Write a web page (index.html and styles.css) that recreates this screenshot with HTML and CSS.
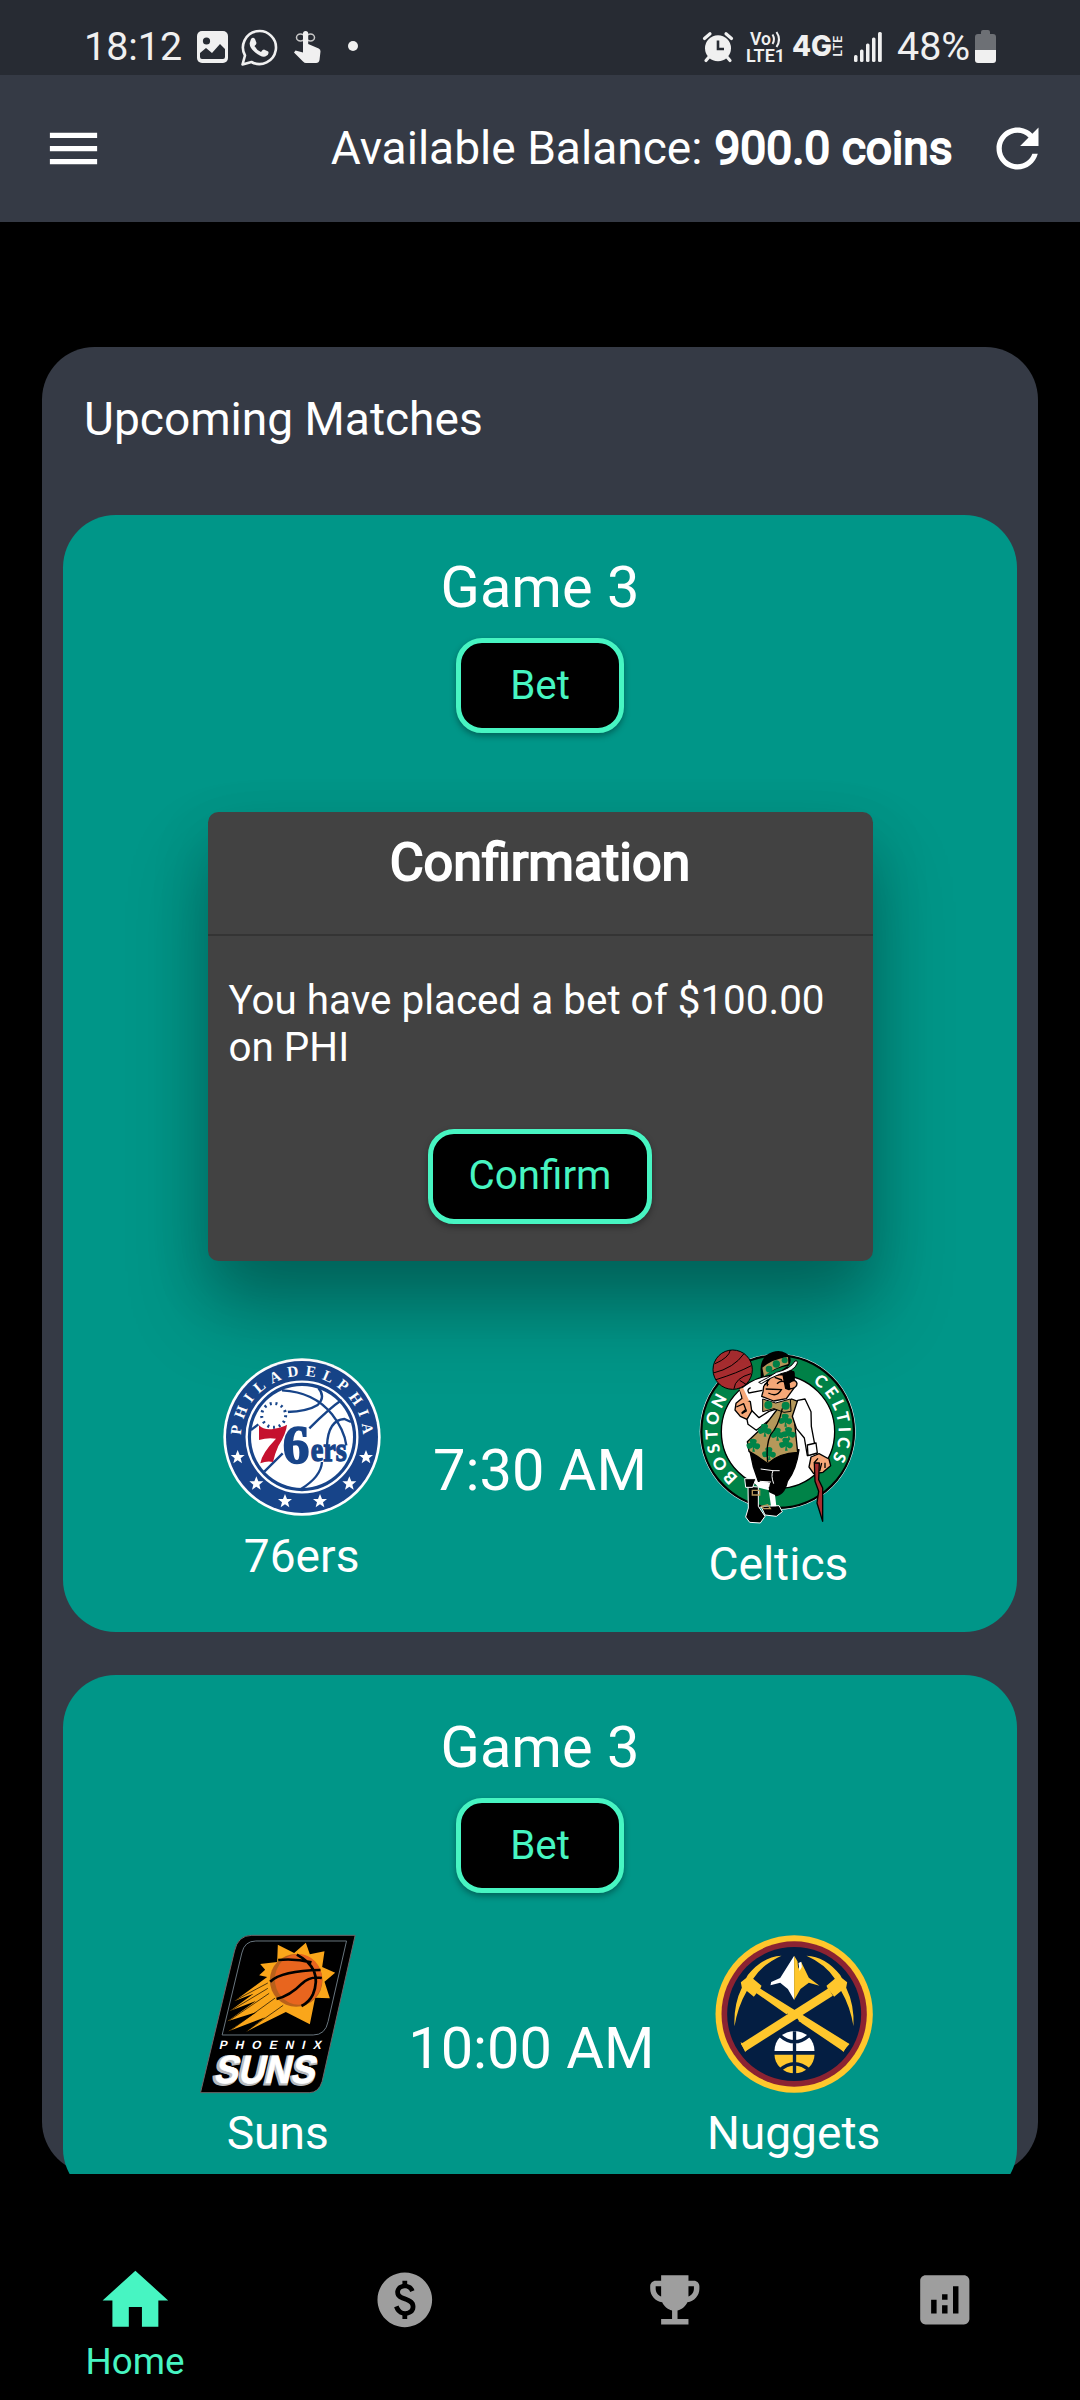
FILE: index.html
```html
<!DOCTYPE html>
<html lang="en">
<head>
<meta charset="utf-8">
<title>Upcoming Matches</title>
<link rel="stylesheet" href="styles.css">
</head>
<body>
<div class="screen">
  <header class="status">
    <span class="clock">18:12</span>
    <svg class="s-gallery" width="31" height="32" viewBox="0 0 31 32"><rect width="31" height="32" rx="5" fill="#f0f0f0"/><circle cx="9.5" cy="10" r="3.6" fill="#272b33"/><path d="M3 22L9 17l6 5 8-9 5 5v8q0 2-2 2H5q-2 0-2-2z" fill="#272b33"/></svg>
    <svg class="s-whatsapp" width="37" height="38" viewBox="0 0 37 38" fill="none"><path d="M1.500 36.500L4 27.500A16.500 16.500 0 1 1 10.500 34Z" stroke="#f0f0f0" stroke-width="2.600" stroke-linejoin="round"/><path d="M10 11q2-2.500 4 0l1.500 4q0 1.500-2 3 2 4 6.500 6 2-2.800 3.500-2.300l3.700 1.800q1.500 3-3 5-4 1-10-4-6-5-5.500-9.500Z" fill="#f0f0f0"/></svg>
    <svg class="s-touch" width="27" height="34" viewBox="0 0 27 34"><g fill="none" stroke="#c8c8c8" stroke-width="1.500"><ellipse cx="6.500" cy="7.500" rx="4" ry="3.500"/><ellipse cx="16.500" cy="7.500" rx="4" ry="3.500"/></g><path d="M9 3.500a2.600 2.600 0 0 1 5.200 0V14l10.500 4.500q2 1 1.800 3L25.500 30q-.5 3-3.500 3H12q-1.500 0-3-1.500L0 22.500l1.500-2L9 22.500Z" fill="#f0f0f0"/></svg>
    <span class="s-dot"></span>
    <svg class="s-right" width="30" height="30" viewBox="0 0 30 30"><path d="M1.500 6.500L7 1.800M28.500 6.500L23 1.800M6 25l-3 3.500M24 25l3 3.500" stroke="#f0f0f0" stroke-width="3.200" stroke-linecap="round"/><circle cx="15" cy="16.300" r="13" fill="#f0f0f0"/><path d="M15 8.500v8.500h6" stroke="#272b33" stroke-width="2.600" fill="none"/></svg>
    <svg class="s-volte" width="40" height="33" viewBox="0 0 40 33" fill="#f0f0f0" font-family="Roboto, sans-serif" font-weight="600"><text x="4" y="14" font-size="18" textLength="21" lengthAdjust="spacingAndGlyphs">Vo</text><path d="M26.500 3.500q3 5 0 9.500M30.500 1q5 7.500 0 15" fill="none" stroke="#f0f0f0" stroke-width="2"/><text x="0" y="31" font-size="19" textLength="39" lengthAdjust="spacingAndGlyphs">LTE1</text></svg>
    <svg class="s-4g" width="51" height="22" viewBox="0 0 51 22" fill="#f0f0f0" font-family="Inter, sans-serif"><text x="0" y="20.500" font-size="28" font-weight="800" textLength="40" lengthAdjust="spacingAndGlyphs">4G</text><text transform="translate(50 21.500) rotate(-90)" font-size="11.500" font-weight="600" textLength="21" lengthAdjust="spacingAndGlyphs">LTE</text></svg>
    <svg class="s-signal" width="28" height="30" viewBox="0 0 28 30" fill="#f0f0f0"><rect x="0" y="23" width="3.500" height="7" rx="1.500"/><rect x="6" y="17.500" width="3.500" height="12.500" rx="1.500"/><rect x="12" y="11.500" width="3.500" height="18.500" rx="1.500"/><rect x="18" y="5.500" width="3.500" height="24.500" rx="1.500"/><rect x="24" y="0" width="3.800" height="30" rx="1.500"/></svg>
    <span class="percent">48%</span>
    <svg class="s-battery" width="21" height="33" viewBox="0 0 21 33"><path d="M6 2q0-2 2-2h5q2 0 2 2v2h3q3 0 3 3v13H0V7q0-3 3-3h3z" fill="#6d7075"/><path d="M0 20h21v10q0 3-3 3H3q-3 0-3-3z" fill="#f0f0f0"/></svg>
  </header>

  <div class="appbar">
    <svg class="menu" viewBox="0 0 24 24" fill="#fff"><path d="M3 18h18v-2H3v2zm0-5h18v-2H3v2zm0-7v2h18V6H3z"/></svg>
    <p class="balance"><span class="balance-label">Available Balance:</span><b class="balance-value">900.0 coins</b></p>
    <svg class="refresh" viewBox="0 0 24 24" fill="#fff"><path d="M17.650 6.350C16.200 4.900 14.210 4 12 4c-4.420 0-7.990 3.580-7.990 8s3.570 8 7.990 8c3.730 0 6.840-2.550 7.730-6h-2.080c-.82 2.330-3.040 4-5.650 4-3.310 0-6-2.690-6-6s2.690-6 6-6c1.660 0 3.140.69 4.220 1.780L13 11h7V4l-2.350 2.350z"/></svg>
  </div>

  <main class="panel">
    <h1 class="panel-title">Upcoming Matches</h1>
    <div class="list">
      <section class="card card-tall">
        <h2 class="game">Game 3</h2>
        <button class="btn bet">Bet</button>
        <div class="teams">
          <div class="team">
            <svg width="158" height="158" viewBox="66 54 474 474">
              <defs><path id="arc76" d="M120 291A183 183 0 0 1 486 291"/></defs>
              <circle cx="303" cy="291" r="236" fill="#fff"/>
              <circle cx="303" cy="291" r="228" fill="#174489"/>
              <circle cx="303" cy="291" r="166" fill="none" stroke="#fff" stroke-width="7"/>
              <circle cx="303" cy="291" r="153" fill="#fff"/>
              <g fill="none" stroke="#174489" stroke-width="7"><path d="M243 151Q340 156 393 223Q430 270 436 316M352 144Q375 170 350 195Q320 214 258 216M422 180Q385 205 325 265M378 316Q382 240 430 237L450 246M363 366Q360 410 300 447M190 395L245 340M150 270L172 253"/></g>
              <circle cx="218" cy="226" r="44" fill="#fff"/>
              <circle cx="218" cy="226" r="36" fill="none" stroke="#174489" stroke-width="9" stroke-dasharray="6 11.400"/>
              <path d="M174 256Q190 272 220 266Q245 262 258 254Q256 280 232 318Q222 340 216 366Q198 362 178 370Q182 340 225 296Q200 292 174 300Z" fill="#c5112e"/>
              <g font-family="Liberation Serif, serif" font-weight="bold" fill="#174489" stroke="#174489"><text x="245" y="369" font-size="166" stroke-width="5" textLength="80" lengthAdjust="spacingAndGlyphs">6</text><text x="329" y="364" font-size="100" stroke-width="4" textLength="108" lengthAdjust="spacingAndGlyphs">ers</text></g>
              <text font-family="Liberation Serif, serif" font-weight="bold" font-size="46" fill="#fff"><textPath href="#arc76" startOffset="1%" textLength="562">PHILADELPHIA</textPath></text>
              <g fill="#fff"><path id="st" d="M110 330l6 15 15 0-12 10 4 15-13-9-13 9 4-15-12-10 15 0z"/><use href="#st" x="56" y="79"/><use href="#st" x="142" y="132"/><use href="#st" x="247" y="132"/><use href="#st" x="335" y="79"/><use href="#st" x="385"/></g>
            </svg>
            <span class="name">76ers</span>
          </div>
          <span class="time">7:30 AM</span>
          <div class="team">
            <svg width="158" height="175" viewBox="60 58 474 525">
              <defs><path id="bos" d="M178 443A181 181 0 0 1 151 198"/><path id="cel" d="M401 158A181 181 0 0 1 456 395"/></defs>
              <circle cx="296" cy="306" r="234" fill="#fff"/>
              <circle cx="296" cy="306" r="229" fill="#008348" stroke="#000" stroke-width="7"/>
              <circle cx="297" cy="306" r="170" fill="#fff" stroke="#000" stroke-width="4"/>
              <g font-family="Lato, sans-serif" font-weight="900" fill="#fff" font-size="50"><text><textPath href="#bos" textLength="262">BOSTON</textPath></text><text><textPath href="#cel" textLength="260">CELTICS</textPath></text></g>
              <g stroke="#000" stroke-width="4" stroke-linejoin="round">
                <path d="M181 172L196 208 214 216 219 249 204 269 184 260 168 241 171 221 189 206Z" fill="#f6a878"/>
                <path d="M172 232l22-10 8 22-14 8M188 250l14-12" fill="none"/>
                <path d="M204 269L219 243 240 264 270 245 300 235 275 268 232 302 207 284Z" fill="#fff"/>
                <path d="M213 365L360 360Q352 420 325 455Q316 498 285 498L270 484 276 457 238 455Q220 410 213 365Z"/>
                <path d="M205 336L262 282 300 232 338 208 356 215 346 270 356 368Q300 370 266 402L235 380 210 365Z" fill="#b5985a"/>
                <path d="M356 212L378 208 396 246 397 290 412 370 385 378 376 325 352 296 340 260Z" fill="#fff"/>
                <path d="M385 346l26-6 4 30-28 8z" fill="#fff"/>
                <path d="M396 382L420 372 450 388 455 408 432 428 404 432 390 412Z" fill="#f6a878"/>
                <path d="M405 400l12-14M422 424l6-24M438 415v-16" fill="none"/>
                <path d="M406 400L421 400 419 450 431 475 431 575 414 520 419 485 408 455Z" fill="#a92d30"/>
                <path d="M254 170L280 138 344 126 346 174 322 207 284 214 248 200 252 186Z" fill="#f6a878"/>
                <path d="M325 112L345 130 345 155 330 180 320 176 312 135 290 136Z"/>
                <path d="M330 160Q350 145 354 162Q354 174 332 178Z" fill="#f6a878"/>
              </g>
              <path d="M245 128Q242 96 262 76Q295 56 320 70Q344 84 330 108Q290 112 245 145Z"/>
              <path d="M250 114Q280 88 327 82L328 103Q285 114 255 140Z" fill="#b5985a"/>
              <path d="M239 158Q265 146 292 128Q335 118 348 94Q358 92 354 103Q345 124 306 132Q270 146 247 162Z" fill="#fff" stroke="#000" stroke-width="3"/>
              <path d="M268 190Q294 204 307 180L260 178M287 143l22 8M294 162q12-12 26-4M265 150v20M250 182l-40 8q-8-10 5-16M256 166q6-8 12 0" fill="none" stroke="#000" stroke-width="4"/>
              <path d="M251 208L290 220 334 208 336 245 315 248 285 237 251 246Z" fill="#b5985a" stroke="#000" stroke-width="3"/>
              <g fill="#008348"><path id="clover" d="M-3 18L-1 5Q-18 16-20 2-24-8-9-8-16-21 0-21 15-20 8-7 23-8 20 5 14 17 2 6L5 18Z" transform="translate(295 315)"/><use href="#clover" x="-72" y="33"/><use href="#clover" x="-25" y="58"/><use href="#clover" x="26" y="30"/><use href="#clover" x="24" y="-42"/><use href="#clover" x="34" y="-2"/><use href="#clover" x="-38" y="-12"/><circle cx="268" cy="226" r="12"/><circle cx="320" cy="228" r="12"/><circle cx="270" cy="118" r="10"/><circle cx="292" cy="103" r="11"/><circle cx="317" cy="92" r="9"/></g>
              <path d="M310 236Q298 290 275 315Q260 345 266 398" fill="none" stroke="#000" stroke-width="4"/>
              <path d="M245 418L282 423H302M282 423Q275 438 284 462M276 457l-34-2" fill="none" stroke="#fff" stroke-width="3"/>
              <g stroke="#fff" stroke-width="3"><path d="M207 470L238 472 238 530 258 560 244 580 212 578 200 562 208 535Z"/><path d="M246 530L300 528 310 546 292 560 258 556Z"/></g>
              <path d="M222 456L268 458 270 482 240 474ZM270 488L288 496 292 530 276 530Z" fill="#fff"/>
              <path d="M197 447h34l-10 26h-21z" stroke="#fff" stroke-width="3"/>
              <path d="M220 482h22v14h-22zM248 530l18-5 8 12h-20z" fill="none" stroke="#b5985a" stroke-width="4"/>
              <circle cx="161" cy="120" r="59" fill="#a92d30" stroke="#000" stroke-width="3"/>
              <path d="M154 61Q150 84 108 102M103 130Q165 115 195 72M111 150Q175 130 217 108M165 177Q168 145 216 132M182 152L201 164" fill="none" stroke="#000" stroke-width="3"/>
              <path d="M181 178L192 174 211 214 196 216Z" fill="#f6a878"/>
            </svg>
            <span class="name">Celtics</span>
          </div>
        </div>
      </section>

      <section class="card card-short">
        <h2 class="game">Game 3</h2>
        <button class="btn bet">Bet</button>
        <div class="teams">
          <div class="team">
            <svg width="156" height="158" viewBox="55 76 467 474">
              <path d="M210 77H520L421 515Q411 549 382 549H56L158 124Q168 77 210 77Z" stroke="#6d6668" stroke-width="3"/>
              <path d="M222 94H494L439 335Q431 376 394 376H121L180 130Q188 94 222 94Z" fill="none" stroke="#68757e" stroke-width="3"/>
              <path d="M288 105L337 130 372 99 384 134 428 125 421 172 460 189 428 216 444 266 400 264 384 344 312 307 193 366 250 323 140 365 225 307 137 335 222 274 144 304 215 252 158 274 256 202 232 197 250 180 235 163 286 157Z" fill="#faa61a"/>
              <path d="M160 272L258 220M147 303L258 236M140 334L262 251M145 363L280 265M195 364L304 287" stroke="#000" stroke-width="2"/>
              <circle cx="343" cy="212" r="79" fill="#b9601a"/>
              <ellipse cx="350" cy="209" rx="71" ry="76" fill="#e8651e"/>
              <path d="M289 151Q340 146 389 158M265 216Q300 183 416 181M284 268Q325 258 360 222Q385 198 420 205M345 135Q425 177 393 255Q382 278 359 289" fill="none" stroke="#000" stroke-width="8"/>
              <g font-family="Liberation Sans, sans-serif" font-weight="bold" transform="skewX(-13)"><text x="207" y="418" font-size="36" fill="#fff" textLength="306">PHOENIX</text><g font-size="118"><text x="209" y="523" fill="#b9babc" stroke="#b9babc" stroke-width="9" textLength="306" lengthAdjust="spacingAndGlyphs">SUNS</text><text x="214" y="519" fill="#fff" stroke="#fff" stroke-width="2" textLength="302" lengthAdjust="spacingAndGlyphs" aria-hidden="true">SUNS</text></g></g>
            </svg>
            <span class="name">Suns</span>
          </div>
          <span class="time">10:00 AM</span>
          <div class="team">
            <svg width="158" height="158" viewBox="77 76 473 474">
              <circle cx="314" cy="313" r="236" fill="#ffc72c"/><circle cx="314" cy="313" r="218" fill="#8b2332"/><circle cx="314" cy="313" r="201" fill="#041e42"/>
              <path d="M211 236L480 403 461 425 330 336 323 326 311 328 200 250Z" fill="#ffc72c"/>
              <path d="M290 317L333 342" stroke="#041e42" stroke-width="12"/>
              <path d="M326 334L342 321 350 326 336 339Z" fill="#ffc72c"/>
              <path d="M417 236L154 403 168 425 430 258Z" fill="#ffc72c"/>
              <path id="head" d="M276 138Q220 140 175 196L170 205 154 218 157 234Q132 285 135 350Q145 290 172 244L193 261 213 236 216 228 191 207Q220 163 276 138Z" fill="#ffc72c"/>
              <use href="#head" transform="matrix(-1 0 0 1 627 0)"/>
              <path d="M153 398L163 402 180 413 167 427ZM477 400L463 404 450 414 462 427Z" fill="#ffc72c"/>
              <path d="M314 138L272 205 245 217 243 227 272 219 295 238 314 271Z" fill="#fff"/>
              <path d="M314 138L324 155 326 177 335 157 358 204 390 228 358 219 333 238 314 271Z" fill="#ffc72c"/><path d="M327 160l3 24 7-12-2-16z" fill="#fff"/>
              <path d="M255 424A60 60 0 0 1 375 424Z" fill="#fff"/><path d="M255 435H375A60 56 0 0 1 255 435Z" fill="#ffc72c"/>
              <path d="M315 365V493M272 378Q315 415 358 378M270 482Q315 443 360 482" fill="none" stroke="#041e42" stroke-width="10"/>
            </svg>
            <span class="name">Nuggets</span>
          </div>
        </div>
      </section>
    </div>
  </main>

  <nav class="nav">
    <a class="tab active"><svg class="home" viewBox="0 0 24 24"><path d="M10 20v-6h4v6h5v-8h3L12 3 2 12h3v8z"/></svg><span class="tab-label">Home</span></a>
    <a class="tab"><svg viewBox="0 0 24 24"><path d="M12 2C6.480 2 2 6.480 2 12s4.480 10 10 10 10-4.480 10-10S17.520 2 12 2zm.88 15.760V19h-1.750v-1.290c-.74-.18-2.390-.77-3.020-2.960l1.650-.67c.06.22.58 2.090 2.400 2.090.93 0 1.980-.48 1.980-1.610 0-.96-.7-1.460-2.280-2.030-1.100-.39-3.350-1.030-3.350-3.310 0-.1.010-2.400 2.620-2.960V5h1.750v1.240c1.840.32 2.510 1.790 2.660 2.230l-1.580.67c-.11-.35-.59-1.340-1.900-1.340-.7 0-1.810.37-1.810 1.390 0 .95.86 1.310 2.640 1.900 2.400.83 3.010 2.050 3.010 3.450 0 2.630-2.500 3.130-3.020 3.220z"/></svg></a>
    <a class="tab"><svg viewBox="0 0 24 24"><path d="M19 5h-2V3H7v2H5c-1.100 0-2 .9-2 2v1c0 2.550 1.920 4.630 4.390 4.940.63 1.500 1.980 2.630 3.610 2.960V19H7v2h10v-2h-4v-3.100c1.630-.33 2.980-1.460 3.610-2.960C19.080 12.630 21 10.550 21 8V7c0-1.100-.9-2-2-2zM5 8V7h2v3.820C5.840 10.400 5 9.300 5 8zm14 0c0 1.300-.84 2.400-2 2.820V7h2v1z"/></svg></a>
    <a class="tab"><svg viewBox="0 0 24 24"><path d="M19 3H5c-1.100 0-2 .9-2 2v14c0 1.100.9 2 2 2h14c1.100 0 2-.9 2-2V5c0-1.100-.9-2-2-2zM9 17H7v-5h2v5zm4 0h-2v-3h2v3zm0-5h-2v-2h2v2zm4 5h-2V7h2v10z"/></svg></a>
  </nav>

  <div class="dialog" role="dialog">
    <h2 class="dialog-title">Confirmation</h2>
    <p class="dialog-text">You have placed a bet of $100.00<br>on PHI</p>
    <button class="btn confirm">Confirm</button>
  </div>
</div>
</body>
</html>
```
FILE: styles.css
```css
* { box-sizing: border-box; margin: 0; padding: 0; }
body { background: #000; color: #fff; font-family: Roboto, sans-serif; font-weight: 400; }
svg { display: block; flex: none; overflow: visible; }
h1, h2 { font-weight: 400; }
.screen { position: relative; width: 1080px; height: 2400px; overflow: hidden; display: flex; flex-direction: column; background: #000; }

.status { height: 75px; flex: none; display: flex; align-items: flex-start; background: #272b33; color: #f0f0f0; padding-left: 84px; font-size: 39.400px; line-height: 47px; }
.clock, .percent { margin-top: 23px; flex: none; white-space: nowrap; }
.clock { width: 113px; }
.s-gallery { margin-top: 31px; }
.s-whatsapp { margin: 28px 0 0 13px; }
.s-touch { margin: 30px 0 0 16px; }
.s-dot { width: 10px; height: 10px; border-radius: 50%; background: #f0f0f0; margin: 41px 0 0 27px; }
.s-right { margin: 32px 0 0 345px; }
.s-volte { margin: 31px 0 0 13px; }
.s-4g { margin: 35px 0 0 6px; }
.s-signal { margin: 32px 0 0 11px; }
.percent { margin-left: 15px; width: 78px; }
.s-battery { margin-top: 30px; }

.appbar { height: 147px; flex: none; display: flex; align-items: center; background: #353a45; padding: 0 31.5px 0 42px; }
.menu, .refresh { width: 63px; height: 63px; }
.balance { flex: 1; display: flex; justify-content: flex-end; gap: 12px; font-size: 46.100px; line-height: 56px; margin: -1px 33px 0 0; white-space: nowrap; }
.balance-value, .dialog-title { font-weight: 400; -webkit-text-stroke: 2px #fff; }

.panel { margin: 125px 42px 0; height: 1827px; flex: none; display: flex; flex-direction: column; background: #353a45; border-radius: 52.500px; }
.panel-title { height: 168px; flex: none; padding: 44px 42px 0; font-size: 46.100px; line-height: 56px; }
.list { flex: 1; min-height: 0; overflow: hidden; display: flex; flex-direction: column; gap: 43px; padding: 0 21px; }
.card { flex: none; display: flex; flex-direction: column; align-items: center; padding: 38px 0 41px; background: #009688; border-radius: 52.500px; }
.card-tall { height: 1117px; }
.card-short { height: 526px; }
.game { font-size: 57.750px; line-height: 68px; }
.btn { height: 95px; border: 5.250px solid #47f5c2; border-radius: 26px; background: #000; color: #47f5c2; font: 400 40.300px/47px Roboto, sans-serif; box-shadow: 0 3px 6px rgba(0, 0, 0, .35); padding-bottom: 1px; }
.bet { width: 168px; margin-top: 17px; }
.teams { margin-top: auto; display: flex; align-items: center; gap: 52.500px; }
.team { display: flex; flex-direction: column; align-items: center; gap: 13px; }
.name { font-size: 46.100px; line-height: 54px; }
.time { font-size: 57.750px; line-height: 68px; }

.nav { flex: 1; display: flex; align-items: flex-start; padding-top: 87px; }
.tab { flex: 1; display: flex; flex-direction: column; align-items: center; fill: #9e9e9e; padding-top: 6px; }
.tab svg { width: 65.600px; height: 65.600px; }
.tab.active { fill: #47f5c2; color: #47f5c2; padding-top: 0; }
.tab .home { width: 78.750px; height: 78.750px; }
.tab-label { font-size: 36.750px; line-height: 43px; }

/* modal lies over the match list */
.dialog { position: absolute; left: 207.500px; top: 811.500px; width: 665px; height: 449px; display: flex; flex-direction: column; align-items: center; background: #424242; border-radius: 10.500px; box-shadow: 0 50px 80px rgba(0, 0, 0, .26), 0 24px 60px rgba(0, 0, 0, .14); }
.dialog-title { width: 100%; height: 124px; flex: none; padding-top: 20px; border-bottom: 2px solid #343434; text-align: center; font-size: 52px; line-height: 62px; }
.dialog-text { align-self: flex-start; padding: 41px 0 0 21px; font-size: 40.400px; line-height: 47px; white-space: nowrap; }
.confirm { width: 224px; margin-top: 58px; }
```
